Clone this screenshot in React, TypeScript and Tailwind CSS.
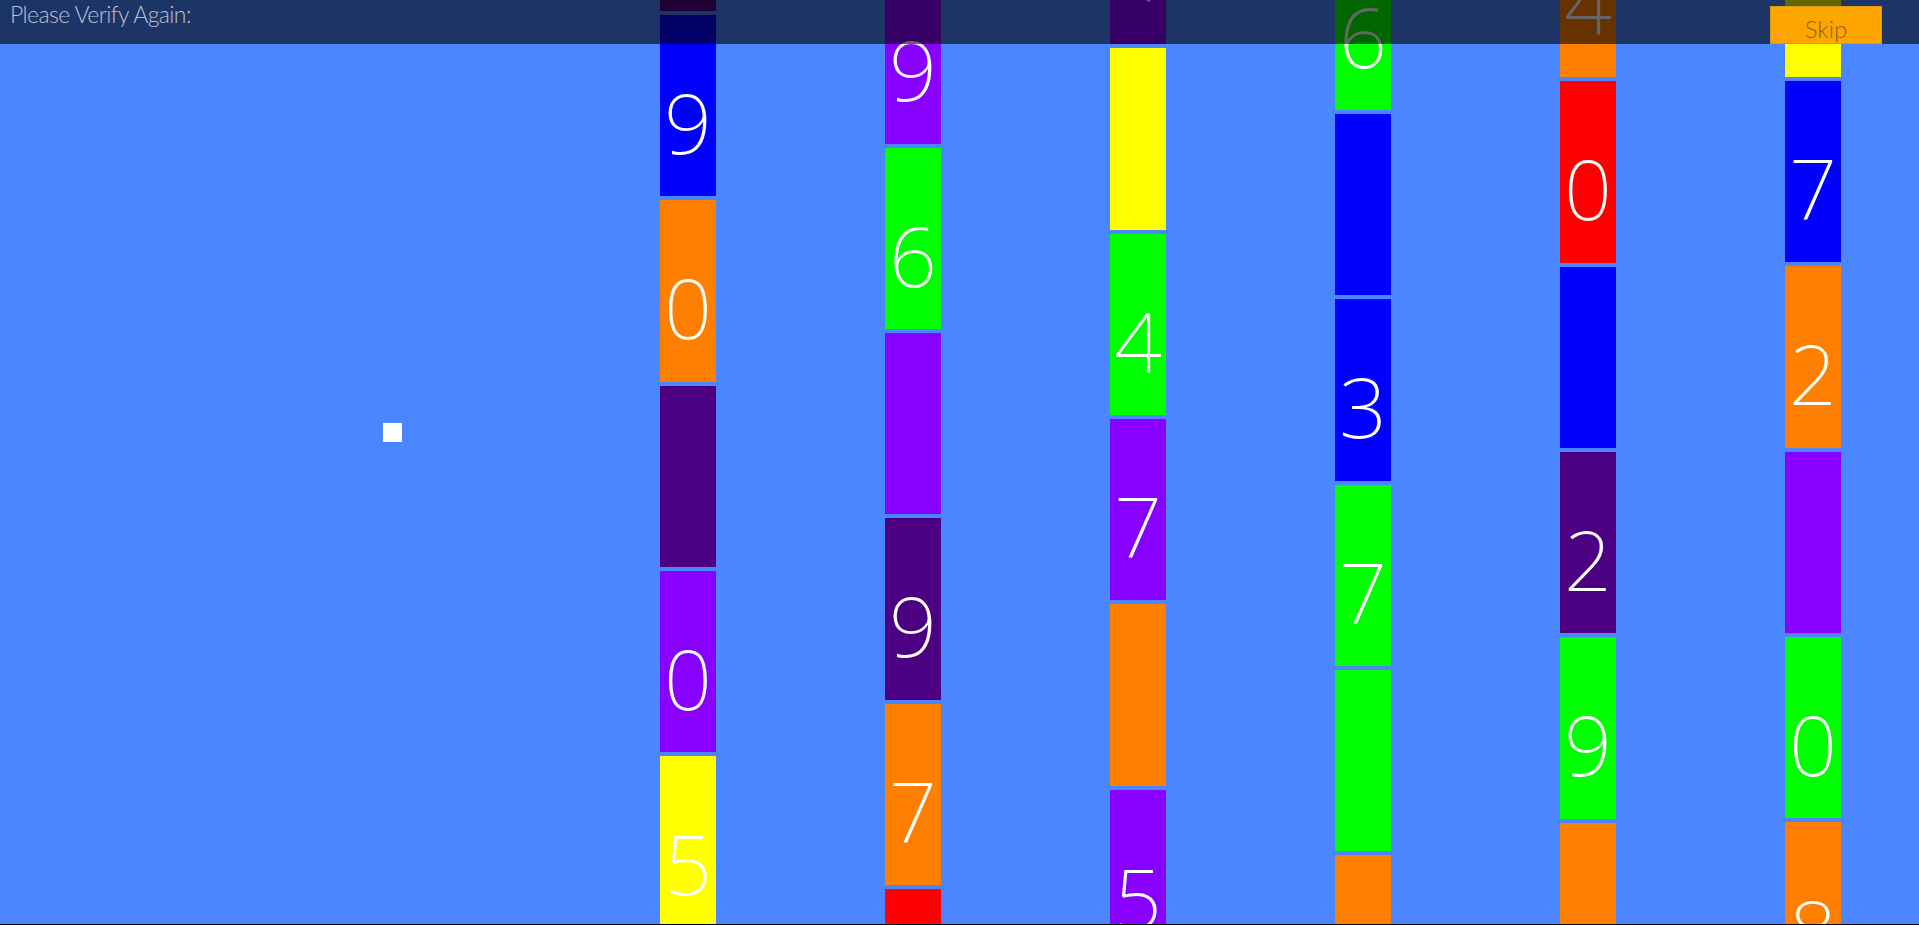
import React from "react";

type Block = { c: string; d?: string };

const C = {
  indigo: "bg-[#4b0082]",
  blue: "bg-[#0000ff]",
  orange: "bg-[#ff8000]",
  purple: "bg-[#8800ff]",
  yellow: "bg-[#ffff00]",
  green: "bg-[#00ff00]",
  red: "bg-[#ff0000]",
};

const columns: { offset: string; blocks: Block[] }[] = [
  {
    offset: "-mt-[170.33px]",
    blocks: [
      { c: C.indigo },
      { c: C.blue, d: "9" },
      { c: C.orange, d: "0" },
      { c: C.indigo },
      { c: C.purple, d: "0" },
      { c: C.yellow, d: "5" },
    ],
  },
  {
    offset: "-mt-[37.67px]",
    blocks: [
      { c: C.purple, d: "9" },
      { c: C.green, d: "6" },
      { c: C.purple },
      { c: C.indigo, d: "9" },
      { c: C.orange, d: "7" },
      { c: C.red },
    ],
  },
  {
    offset: "-mt-[137px]",
    blocks: [
      { c: C.purple, d: "4" },
      { c: C.yellow },
      { c: C.green, d: "4" },
      { c: C.purple, d: "7" },
      { c: C.orange },
      { c: C.purple, d: "5" },
    ],
  },
  {
    offset: "-mt-[71.33px]",
    blocks: [
      { c: C.green, d: "6" },
      { c: C.blue },
      { c: C.blue, d: "3" },
      { c: C.green, d: "7" },
      { c: C.green },
      { c: C.orange },
    ],
  },
  {
    offset: "-mt-[104px]",
    blocks: [
      { c: C.orange, d: "4" },
      { c: C.red, d: "0" },
      { c: C.blue },
      { c: C.indigo, d: "2" },
      { c: C.green, d: "9" },
      { c: C.orange },
    ],
  },
  {
    offset: "-mt-[104.33px]",
    blocks: [
      { c: C.yellow },
      { c: C.blue, d: "7" },
      { c: C.orange, d: "2" },
      { c: C.purple },
      { c: C.green, d: "0" },
      { c: C.orange, d: "8" },
    ],
  },
];

export default function App() {
  return (
    <div className="h-[925px] w-full bg-black overflow-hidden">
      <div
        className="relative h-[924px] w-full bg-[#4a86ff] overflow-hidden"
        style={{ fontFamily: "Lato, 'Open Sans', sans-serif" }}
      >
        <div className="flex flex-row gap-[169px] pl-[660px] items-start">
          {columns.map((col, i) => (
            <div key={i} className={`flex flex-col gap-[4px] w-[56px] shrink-0 ${col.offset}`}>
              {col.blocks.map((b, j) => (
                <div
                  key={j}
                  className={`h-[181.33px] w-[56px] shrink-0 ${b.c} flex justify-center pt-[65px]`}
                >
                  {b.d ? (
                    <span className="text-white text-[84px] leading-none font-extralight font-['Noto_Sans',sans-serif]">
                      {b.d}
                    </span>
                  ) : null}
                </div>
              ))}
            </div>
          ))}
        </div>

        <div className="absolute left-[383px] top-[423px] h-[19px] w-[19px] bg-white" />

        <div className="absolute left-0 top-0 h-[44px] w-full bg-black/60">
          <div className="pl-[10px] pt-[3px] text-[23px] tracking-[-0.6px] leading-none font-light text-[#b8c0d4]">
            Please Verify Again:
          </div>
        </div>

        <div className="absolute left-[1770px] top-[6px] h-[38px] w-[112px] bg-[#ffa500] border border-[#e0960c] flex justify-center pt-[10px]">
          <span className="text-[24px] leading-none font-light text-[#8c6410]">Skip</span>
        </div>
      </div>
    </div>
  );
}
